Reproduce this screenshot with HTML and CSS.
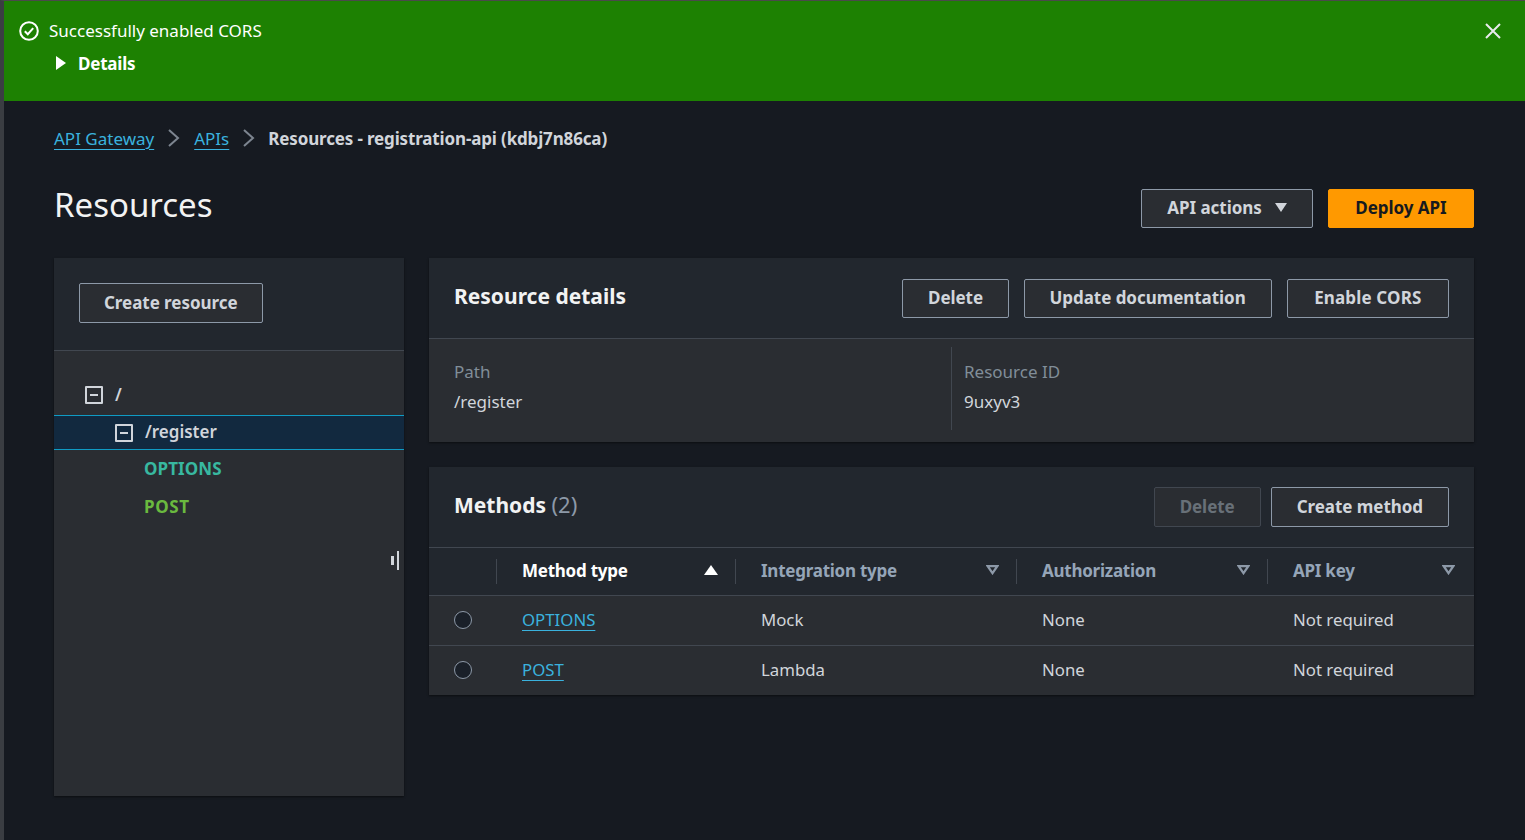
FILE: index.html
```html
<!DOCTYPE html>
<html lang="en">
<head>
<meta charset="UTF-8">
<meta name="viewport" content="width=device-width, initial-scale=1.0">
<title>Resources</title>
<link rel="stylesheet" href="styles.css">
</head>
<body>

<div class="flash">
  <div class="flash-text">
    <div class="flash-title">
      <svg width="20" height="20" viewBox="0 0 20 20" fill="none" stroke="#fff" stroke-width="2"><circle cx="10" cy="10" r="8.8"/><path d="M5.8 10.2l3 3 5.4-6"/></svg>
      <span>Successfully enabled CORS</span>
    </div>
    <div class="flash-details">
      <svg width="10" height="14" viewBox="0 0 10 14"><path d="M0 0l10 7-10 7z" fill="#fff"/></svg>
      <span>Details</span>
    </div>
  </div>
  <svg class="flash-close" width="18" height="18" viewBox="0 0 18 18" fill="none" stroke="#e9ebed" stroke-width="2"><path d="M2 2l14 14M16 2L2 16"/></svg>
</div>

<div class="content">
  <nav class="crumbs">
    <a href="#">API Gateway</a>
    <svg width="14" height="20" viewBox="0 0 14 20" fill="none" stroke="#7d8590" stroke-width="2"><path d="M2 2l9 8-9 8"/></svg>
    <a href="#">APIs</a>
    <svg width="14" height="20" viewBox="0 0 14 20" fill="none" stroke="#7d8590" stroke-width="2"><path d="M2 2l9 8-9 8"/></svg>
    <span class="crumb-current">Resources - registration-api (kdbj7n86ca)</span>
  </nav>

  <div class="page-head">
    <h1>Resources</h1>
    <div class="btn-row">
      <button class="btn">API actions
        <svg width="12" height="9" viewBox="0 0 12 9"><path d="M0 0h12L6 9z" fill="#d1d5db"/></svg>
      </button>
      <button class="btn btn-primary">Deploy API</button>
    </div>
  </div>

  <div class="columns">
    <aside class="tree-panel">
      <div class="tree-top">
        <button class="btn">Create resource</button>
      </div>
      <div class="tree">
        <div class="tree-row root">
          <span class="toggle"></span>
          <span class="tree-label">/</span>
        </div>
        <div class="tree-row selected">
          <span class="toggle"></span>
          <span class="tree-label">/register</span>
        </div>
        <div class="tree-row method options">OPTIONS</div>
        <div class="tree-row method post">POST</div>
      </div>
      <div class="resize-handle"><i></i><b></b></div>
    </aside>

    <main class="main-col">
      <section class="card">
        <div class="card-head details-head">
          <h2>Resource details</h2>
          <div class="btn-row">
            <button class="btn btn-short">Delete</button>
            <button class="btn">Update documentation</button>
            <button class="btn btn-cors">Enable CORS</button>
          </div>
        </div>
        <div class="details">
          <div class="detail">
            <div class="detail-label">Path</div>
            <div>/register</div>
          </div>
          <div class="detail">
            <div class="detail-label">Resource ID</div>
            <div>9uxyv3</div>
          </div>
        </div>
      </section>

      <section class="card">
        <div class="card-head methods-head">
          <h2>Methods <span class="count">(2)</span></h2>
          <div class="btn-row">
            <button class="btn btn-disabled">Delete</button>
            <button class="btn">Create method</button>
          </div>
        </div>
        <table class="methods">
          <thead>
            <tr>
              <th class="col-radio"></th>
              <th class="col-method"><div class="th-in sorted">Method type
                <svg width="14" height="10" viewBox="0 0 14 10"><path d="M7 0l7 10H0z" fill="#fff"/></svg></div></th>
              <th class="col-integration"><div class="th-in">Integration type
                <svg width="13" height="10" viewBox="0 0 13 10" fill="none" stroke="#8d99a8" stroke-width="2.2"><path d="M1.7 1.2h9.6l-4.8 7z"/></svg></div></th>
              <th class="col-auth"><div class="th-in">Authorization
                <svg width="13" height="10" viewBox="0 0 13 10" fill="none" stroke="#8d99a8" stroke-width="2.2"><path d="M1.7 1.2h9.6l-4.8 7z"/></svg></div></th>
              <th class="col-key"><div class="th-in">API key
                <svg width="13" height="10" viewBox="0 0 13 10" fill="none" stroke="#8d99a8" stroke-width="2.2"><path d="M1.7 1.2h9.6l-4.8 7z"/></svg></div></th>
            </tr>
          </thead>
          <tbody>
            <tr>
              <td class="cell-radio"><span class="radio"></span></td>
              <td><a href="#">OPTIONS</a></td>
              <td>Mock</td>
              <td>None</td>
              <td>Not required</td>
            </tr>
            <tr>
              <td class="cell-radio"><span class="radio"></span></td>
              <td><a href="#">POST</a></td>
              <td>Lambda</td>
              <td>None</td>
              <td>Not required</td>
            </tr>
          </tbody>
        </table>
      </section>
    </main>
  </div>
</div>

</body>
</html>
```

FILE: styles.css
```css
* {
  box-sizing: border-box;
}
body {
  margin: 0;
  height: 840px;
  overflow: hidden;
  background-color: #161a21;
  border-top: 1px solid #4a4a4a;
  border-left: 4px solid #3a3d42;
  font-family: "Noto Sans", Arial, sans-serif;
  font-size: 17px;
  color: #d1d5db;
}
a {
  color: #3ab2de;
  text-decoration: underline;
  text-underline-offset: 4px;
  text-decoration-thickness: 1px;
}
h1, h2 {
  margin: 0;
}

.flash {
  height: 100px;
  background-color: #1d8102;
  color: #fff;
  display: flex;
  justify-content: space-between;
  padding: 18px 23px 0 15px;
}
.flash-title {
  display: flex;
  align-items: center;
  gap: 10px;
  height: 22px;
  font-size: 17px;
}
.flash-title svg {
  margin-top: 2px;
}
.flash-details {
  display: flex;
  align-items: center;
  gap: 12px;
  margin: 11px 0 0 37px;
  height: 22px;
  font-weight: 700;
  letter-spacing: -0.2px;
}
.flash-close {
  margin-top: 3px;
}

.content {
  padding: 27px 51px 0 50px;
}
.crumbs {
  display: flex;
  align-items: center;
  height: 20px;
  gap: 13px;
}
.crumb-current {
  font-weight: 700;
  margin-left: -1px;
  letter-spacing: -0.15px;
}

.page-head {
  display: flex;
  justify-content: space-between;
  align-items: center;
  margin-top: 41px;
  height: 39px;
}
h1 {
  font-size: 33px;
  font-weight: 400;
  color: #f2f3f3;
  margin-bottom: 8px;
}
.btn-row {
  display: flex;
  gap: 15px;
}
.btn {
  height: 39px;
  padding: 0 25px 2px;
  background-color: #2a2d32;
  border: 1px solid #8d99a8;
  border-radius: 2px;
  color: #d1d5db;
  font-family: inherit;
  font-size: 17px;
  font-weight: 700;
  letter-spacing: -0.05px;
  display: flex;
  align-items: center;
  gap: 13px;
}
.btn-primary {
  background-color: #ff9900;
  border-color: #ff9900;
  color: #16191f;
  padding: 0 26.5px 2px;
}
.btn-cors {
  padding: 0 26.5px 2px;
  letter-spacing: 0.15px;
}
.btn-short {
  padding: 0 24.5px 2px;
}
.btn-disabled {
  background-color: #2a2d32;
  border-color: #414750;
  color: #687078;
}

.columns {
  display: flex;
  gap: 25px;
  margin-top: 30px;
  align-items: flex-start;
}
.tree-panel {
  position: relative;
  width: 350px;
  height: 538px;
  background-color: #2a2d32;
  box-shadow: 0 1px 2px rgba(0, 0, 0, 0.5);
}
.tree-top {
  height: 93px;
  background-color: #22272e;
  border-bottom: 1px solid #414750;
  padding: 25px;
  display: flex;
  align-items: flex-start;
}
.tree-top .btn {
  height: 40px;
  padding: 0 24px 2px;
}
.tree {
  padding-top: 24px;
}
.tree-row {
  height: 38px;
  display: flex;
  align-items: center;
  gap: 12px;
  font-weight: 600;
}
.tree-label {
  margin-bottom: 2px;
}
.tree-row.root {
  padding-left: 31px;
  height: 40px;
}
.tree-row.selected {
  padding-left: 61px;
  height: 35px;
  background-color: #12293f;
  border-top: 1px solid #0f9bc4;
  border-bottom: 1px solid #0f9bc4;
}
.tree-row.method {
  padding: 0 0 1px 90px;
  font-weight: 700;
  letter-spacing: 0.1px;
}
.options {
  color: #38b8a0;
}
.tree-row.post {
  color: #6ab93f;
  letter-spacing: 0.6px;
}
.toggle {
  position: relative;
  width: 18px;
  height: 18px;
  border: 2px solid #d1d5db;
  border-radius: 1px;
}
.toggle::after {
  content: "";
  position: absolute;
  left: 3px;
  top: 6px;
  width: 8px;
  height: 2px;
  background-color: #d1d5db;
}
.resize-handle {
  position: absolute;
  right: 5px;
  top: 293px;
  display: flex;
  align-items: center;
  gap: 3px;
}
.resize-handle i {
  width: 3px;
  height: 9px;
  background-color: #d1d5db;
}
.resize-handle b {
  width: 2px;
  height: 19px;
  background-color: #d1d5db;
}

.main-col {
  flex: 1;
  display: flex;
  flex-direction: column;
  gap: 25px;
}
.card {
  background-color: #2a2d32;
  box-shadow: 0 1px 2px rgba(0, 0, 0, 0.5);
}
.card-head {
  height: 81px;
  background-color: #22272e;
  border-bottom: 1px solid #414750;
  padding: 20px 25px 0;
  display: flex;
  justify-content: space-between;
  align-items: flex-start;
}
.details-head {
  padding-top: 21px;
}
.card-head h2 {
  font-size: 21px;
  font-weight: 700;
  color: #f2f3f3;
  line-height: 34px;
}
.methods-head h2 {
  line-height: 35px;
}
.count {
  font-size: 22px;
  font-weight: 400;
  color: #8d99a8;
}
.methods-head .btn {
  height: 40px;
}
.methods-head .btn-row {
  gap: 10px;
}
.details {
  display: flex;
  height: 103px;
  padding: 8px 0 12px;
}
.detail {
  flex: 0 0 522px;
  padding: 10px 25px 0;
  line-height: 30px;
}
.detail + .detail {
  border-left: 1px solid #414750;
  padding-left: 12px;
}
.detail-label {
  color: #818e99;
}

.methods {
  width: 100%;
  border-collapse: collapse;
  table-layout: fixed;
}
.methods th {
  height: 47px;
  background-color: #22272e;
  padding: 0;
  text-align: left;
  font-weight: 700;
  color: #95a5b8;
  letter-spacing: -0.25px;
}
.th-in {
  height: 25px;
  display: flex;
  justify-content: space-between;
  align-items: center;
  border-left: 1px solid #414750;
  padding: 0 17px 2px 25px;
}
.col-key .th-in {
  padding-right: 19px;
}
.sorted {
  color: #fff;
}
.col-radio {
  width: 67px;
}
.col-method {
  width: 239px;
}
.col-integration {
  width: 281px;
}
.col-auth {
  width: 251px;
}
.methods td {
  height: 50px;
  padding: 0 0 2px 26px;
  border-top: 1px solid #414750;
  font-size: 16.8px;
}
.methods td.cell-radio {
  padding-bottom: 0;
}
.radio {
  display: block;
  width: 18px;
  height: 18px;
  border: 1.5px solid #8d99a8;
  border-radius: 50%;
  background-color: #1a2029;
  margin-left: -1px;
}
```
